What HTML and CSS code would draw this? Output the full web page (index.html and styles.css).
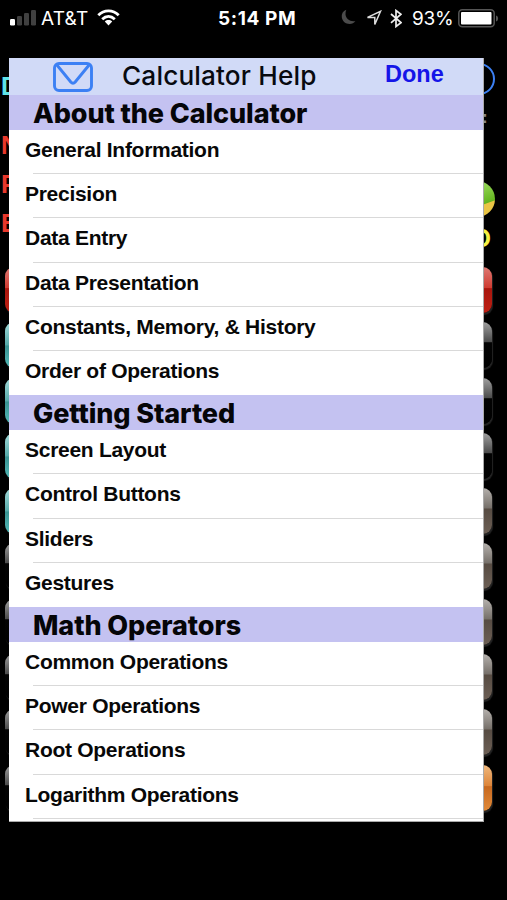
FILE: index.html
```html
<!DOCTYPE html>
<html lang="en">
<head>
<meta charset="utf-8">
<title>Calculator Help</title>
<link rel="stylesheet" href="styles.css">
</head>
<body>
<div class="phone">
  <header class="status">
    <div class="status-left">
      <svg class="signal" width="26" height="17" viewBox="0 0 26 17"><rect x="0" y="10" width="5" height="6.500" rx="1.200" fill="#fff"/><g fill="#404040"><rect x="7" y="7" width="5" height="9.500" rx="1.200"/><rect x="14" y="4" width="5" height="12.500" rx="1.200"/><rect x="21" y="1" width="5" height="15.500" rx="1.200"/></g></svg>
      <span class="carrier">AT&amp;T</span>
      <svg class="wifi" width="23" height="17" viewBox="0 0 23 17"><g fill="none" stroke="#fff" stroke-width="2.800"><path d="M1.300 6.200C7 .4 16 .4 21.700 6.200"/><path d="M5.200 10.200C9 6.600 14 6.600 17.800 10.200"/></g><path d="M7.800 12.500C10 10.600 13 10.600 15.200 12.500L11.500 16.500Z" fill="#fff"/></svg>
    </div>
    <span class="clock">5:14 PM</span>
    <div class="status-right">
      <svg class="moon" width="15" height="16" viewBox="0 0 15 16"><path d="M5.300 .7C1.800 2 .3 5 .8 8.300C1.400 12.400 4.700 15 8.500 15C11 15 13.200 13.900 14.400 12C9.200 13.100 4.800 9.800 4.500 5.500C4.400 3.600 4.700 2 5.300 .7Z" fill="#4b4b4b"/></svg>
      <svg class="arrow" width="16" height="16" viewBox="0 0 16 16"><path d="M1.500 7.400L14.500 1.300L8.800 14.500V7.400Z" fill="none" stroke="#ddd" stroke-width="1.500"/></svg>
      <svg class="bluetooth" width="12" height="19" viewBox="0 0 12 19"><path d="M1 5L11 13.600L6 17.500V1.500L11 5.200L1 13.800" fill="none" stroke="#eee" stroke-width="1.700"/></svg>
      <span class="percent">93%</span>
      <svg class="battery" width="41" height="19" viewBox="0 0 41 19"><rect x=".8" y=".8" width="35.400" height="17" rx="3.500" fill="none" stroke="#555" stroke-width="1.500"/><rect x="3" y="3" width="30.500" height="12.500" rx="1" fill="#fff"/><path d="M38 6.500C40.800 7 40.800 12 38 12.500Z" fill="#555"/></svg>
    </div>
  </header>

  <main class="stage">
    <div class="calculator">
      <div class="readouts">
        <div class="readout-left">
          <span class="mode-deg">D</span>
          <span class="mode">N</span>
          <span class="mode">P</span>
          <span class="mode">E</span>
        </div>
        <div class="readout-right">
          <span class="ring"></span>
          <span class="equals">=</span>
          <span class="ball"></span>
          <span class="letter-o">O</span>
        </div>
      </div>
      <div class="keys">
        <i class="key red"></i><i class="key red"></i>
        <i class="key teal"></i><i class="key dark"></i>
        <i class="key teal"></i><i class="key dark"></i>
        <i class="key teal"></i><i class="key dark"></i>
        <i class="key teal"></i><i class="key brown"></i>
        <i class="key dark"></i><i class="key brown"></i>
        <i class="key dark"></i><i class="key brown"></i>
        <i class="key dark"></i><i class="key brown"></i>
        <i class="key dark"></i><i class="key brown"></i>
        <i class="key dark"></i><i class="key orange"></i>
      </div>
    </div>

    <section class="panel">
      <div class="titlebar">
        <svg class="mail" width="40" height="30" viewBox="0 0 40 30"><rect x="1.500" y="1.500" width="37" height="27" rx="4.500" fill="none" stroke="#3c80f4" stroke-width="2.900"/><path d="M3.500 2.500L17.800 20Q20 22.500 22.200 20L36.500 2.500" fill="none" stroke="#3c80f4" stroke-width="2.900"/></svg>
        <h1 class="title">Calculator Help</h1>
        <span class="done">Done</span>
      </div>
      <h2 class="group">About the Calculator</h2>
      <ul class="list">
        <li>General Information</li>
        <li>Precision</li>
        <li>Data Entry</li>
        <li>Data Presentation</li>
        <li>Constants, Memory, &amp; History</li>
        <li>Order of Operations</li>
      </ul>
      <h2 class="group">Getting Started</h2>
      <ul class="list">
        <li>Screen Layout</li>
        <li>Control Buttons</li>
        <li>Sliders</li>
        <li>Gestures</li>
      </ul>
      <h2 class="group">Math Operators</h2>
      <ul class="list last">
        <li>Common Operations</li>
        <li>Power Operations</li>
        <li>Root Operations</li>
        <li>Logarithm Operations</li>
      </ul>
    </section>
  </main>
</div>
</body>
</html>
```
FILE: styles.css
```css
* { box-sizing: border-box; }
body { margin: 0; background: #000; font-family: "Liberation Sans", sans-serif; }
h1, h2, ul { margin: 0; padding: 0; font-weight: inherit; list-style: none; }
svg { display: block; flex: none; }
.phone { width: 507px; height: 900px; overflow: hidden; background: #000; }

.status { height: 58px; padding: 0 8px 0 10px; display: grid; grid-template-columns: 208px 1fr auto; color: #fff; font-family: Inter, sans-serif; }
.status-left, .status-right { display: flex; align-items: center; height: 36px; }
.carrier { margin-left: 5px; font-size: 19px; letter-spacing: .2px; width: 47px; white-space: nowrap; }
.wifi { margin-left: 9px; margin-top: -2px; }
.signal { margin-top: -2px; }
.clock { line-height: 37px; font-size: 19px; font-weight: 700; letter-spacing: .6px; white-space: nowrap; }
.moon { margin-right: 10px; margin-top: -2px; }
.arrow { margin-right: 8px; }
.bluetooth { margin-right: 10px; }
.percent { font-size: 19px; width: 41px; margin-right: 5px; letter-spacing: -.2px; white-space: nowrap; }

.stage { position: relative; height: 842px; }
.calculator { height: 764px; }
.readouts { height: 209px; display: flex; justify-content: space-between; }
.readout-left { display: flex; flex-direction: column; padding-left: 1px; font-size: 25px; line-height: 39px; font-weight: 700; color: #e8382b; }
.mode-deg { color: #5fe3e8; height: 68px; line-height: 56px; }
.mode { height: 39px; }
.readout-right { width: 42px; margin-right: 12px; display: flex; flex-direction: column; align-items: flex-end; }
.ring { width: 32px; height: 32px; margin-top: 5px; border: 2px solid #3c80f4; border-radius: 50%; }
.equals { height: 28px; margin: 10px 8px 0 0; line-height: 28px; font-size: 24px; font-weight: 700; color: #888; }
.ball { flex: none; width: 36px; height: 36px; margin-top: 48px; border-radius: 50%; background: linear-gradient(-20deg, #e9c445 0 33%, #63b51f 35%, #8ccf4c 68%, #a5dc78); }
.letter-o { margin: 7px 4px 0 0; line-height: 28px; font-size: 25px; font-weight: 700; color: #f4f044; }

.keys { display: grid; grid-template-columns: 50px 50px; justify-content: space-between; grid-auto-rows: 46px; row-gap: 9.300px; padding: 0 15px 0 5px; }
.key { border-radius: 9px; box-shadow: 1px 2px 1px #242424; }
.red { background: linear-gradient(#de7a74, #cf3c32 45%, #a8160d 47%, #bf2014); }
.teal { background: linear-gradient(#a5dcdb, #56aaa9 50%, #3a9392 52%, #53bab8); }
.dark { background: linear-gradient(#a0a0a0, #4c4c4c 43%, #030303 45%, #000); }
.brown { background: linear-gradient(#b5b1ad, #77716b 43%, #574c43 46%, #6c5f55); }
.orange { background: linear-gradient(#efb97f, #dd853a 45%, #c76920 47%, #e18a39); }

.panel { position: absolute; left: 9px; top: 0; width: 475px; height: 764px; background: #fff; border: solid #aaa; border-width: 0 1px 1px 0; overflow: hidden; }
.titlebar { height: 37.300px; display: flex; background: #d1daf7; }
.mail { margin: 4px 0 0 44px; }
.title { margin-left: 29px; width: 204px; font: 500 26.200px/35px Inter, sans-serif; letter-spacing: .15px; white-space: nowrap; color: #080a10; }
.done { margin-left: 59px; font-size: 23.500px; line-height: 32px; font-weight: 700; color: #1515e8; }
.group { height: 34.700px; padding-left: 24px; background: #c4c2f1; font: 800 27px/37px Inter, sans-serif; letter-spacing: -.1px; white-space: nowrap; color: #050508; }
.list li { height: 44.250px; padding-left: 16px; font-size: 21px; letter-spacing: -.28px; line-height: 40px; font-weight: 700; color: #080808; white-space: nowrap; background: linear-gradient(#d9d9d9, #d9d9d9) 24px 100% / 100% 1px no-repeat; }
.list:not(.last) li:last-child { background: none; }
```
